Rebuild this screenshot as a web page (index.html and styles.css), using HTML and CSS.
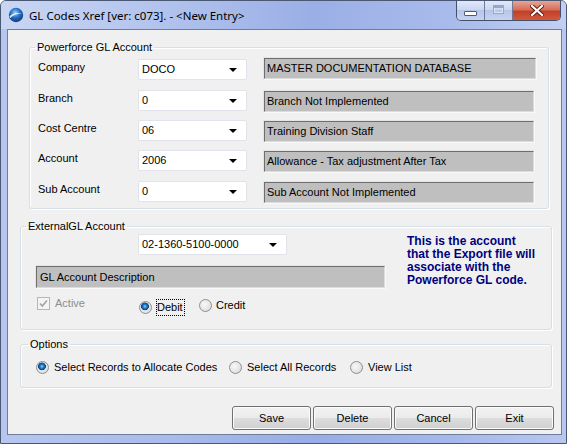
FILE: index.html
```html
<!DOCTYPE html>
<html lang="en">
<head>
<meta charset="utf-8">
<title>GL Codes Xref</title>
<link rel="stylesheet" href="styles.css">
</head>
<body>
<div class="window">
  <div class="titlebar">
    <svg class="app-icon" width="16" height="16" viewBox="0 0 16 16">
      <defs>
        <radialGradient id="orb" cx="0.45" cy="0.35" r="0.7">
          <stop offset="0" stop-color="#9fd0ff"/>
          <stop offset="0.45" stop-color="#2a72c8"/>
          <stop offset="1" stop-color="#0c2f6e"/>
        </radialGradient>
      </defs>
      <circle cx="8" cy="8" r="7.2" fill="url(#orb)"/>
      <path d="M1.5 9.5 C4 6.2 9 5 14.6 6.6 C10 6.4 5.5 7.6 2.2 11 Z" fill="#ffffff" opacity="0.85"/>
    </svg>
    <span class="title-text">GL Codes Xref [ver: c073]. - &lt;New Entry&gt;</span>
    <div class="caption-buttons">
      <div class="cap cap-min"><span class="min-bar"></span></div>
      <div class="cap cap-max"><span class="max-box"></span></div>
      <div class="cap cap-close">
        <svg width="14" height="11" viewBox="0 0 14 11">
          <path d="M2 1 L12 10 M12 1 L2 10" stroke="#5a1a10" stroke-width="4" stroke-linecap="square"/>
          <path d="M2 1 L12 10 M12 1 L2 10" stroke="#ffffff" stroke-width="2.2" stroke-linecap="square"/>
        </svg>
      </div>
    </div>
  </div>

  <div class="client">
    <fieldset class="group group-gl">
      <legend>Powerforce GL Account</legend>
      <div class="gl-grid">
        <div class="gl-row first">
          <span class="lbl">Company</span>
          <div class="combo"><span class="combo-text">DOCO</span><span class="arrow"></span></div>
          <div class="desc wide"><span class="desc-inner">MASTER DOCUMENTATION DATABASE</span></div>
        </div>
        <div class="gl-row">
          <span class="lbl">Branch</span>
          <div class="combo"><span class="combo-text">0</span><span class="arrow"></span></div>
          <div class="desc"><span class="desc-inner">Branch Not Implemented</span></div>
        </div>
        <div class="gl-row">
          <span class="lbl">Cost Centre</span>
          <div class="combo"><span class="combo-text">06</span><span class="arrow"></span></div>
          <div class="desc"><span class="desc-inner">Training Division Staff</span></div>
        </div>
        <div class="gl-row">
          <span class="lbl">Account</span>
          <div class="combo"><span class="combo-text">2006</span><span class="arrow"></span></div>
          <div class="desc"><span class="desc-inner">Allowance - Tax adjustment After Tax</span></div>
        </div>
        <div class="gl-row">
          <span class="lbl">Sub Account</span>
          <div class="combo"><span class="combo-text">0</span><span class="arrow"></span></div>
          <div class="desc"><span class="desc-inner">Sub Account Not Implemented</span></div>
        </div>
      </div>
    </fieldset>

    <fieldset class="group group-ext">
      <legend>ExternalGL Account</legend>
      <div class="ext-grid">
        <div class="ext-left">
          <div class="combo combo-ext"><span class="combo-text">02-1360-5100-0000</span><span class="arrow"></span></div>
          <div class="desc desc-ext"><span class="desc-inner">GL Account Description</span></div>
          <div class="ext-checks">
            <label class="check-item">
              <span class="checkbox">
                <svg width="11" height="11" viewBox="0 0 11 11"><path d="M2 5.5 L4.3 8 L9 2.5" fill="none" stroke="#a3a3a3" stroke-width="1.6"/></svg>
              </span>
              <span class="disabled-text">Active</span>
            </label>
            <label class="radio-item debit"><span class="radio on"></span><span class="focus">Debit</span></label>
            <label class="radio-item"><span class="radio"></span><span>Credit</span></label>
          </div>
        </div>
        <p class="note">This is the account<br>that the Export file will<br>associate with the<br>Powerforce GL code.</p>
      </div>
    </fieldset>

    <fieldset class="group group-opts">
      <legend>Options</legend>
      <div class="opts-row">
        <label class="radio-item opt-1"><span class="radio on"></span><span>Select Records to Allocate Codes</span></label>
        <label class="radio-item opt-2"><span class="radio"></span><span>Select All Records</span></label>
        <label class="radio-item"><span class="radio"></span><span>View List</span></label>
      </div>
    </fieldset>

    <div class="buttons">
      <button class="btn">Save</button>
      <button class="btn">Delete</button>
      <button class="btn">Cancel</button>
      <button class="btn">Exit</button>
    </div>
  </div>
</div>
</body>
</html>
```

FILE: styles.css
```css
html, body {
  margin: 0;
  padding: 0;
  background: #ffffff;
}

body {
  font-family: "Liberation Sans", Arial, sans-serif;
  font-size: 11px;
  line-height: 13px;
  color: #000000;
}

/* ---- window frame ---- */
.window {
  box-sizing: border-box;
  width: 567px;
  height: 444px;
  border: 1px solid #4b5873;
  border-radius: 6px 6px 0 0;
  background: linear-gradient(90deg, #b7c6ee 0%, #a9bbea 30%, #98ade5 55%, #a6b8ea 80%, #b9c7ef 100%);
  display: flex;
  flex-direction: column;
}

.titlebar {
  height: 28px;
  display: flex;
  align-items: flex-start;
  background: linear-gradient(90deg, #c9d6f3 0%, #b5c5ee 25%, #9aafe6 55%, #a9bbeb 80%, #c2cff2 100%);
  border-radius: 5px 5px 0 0;
}

.app-icon {
  margin: 6px 0 0 7px;
  flex: none;
}

.title-text {
  margin: 7px 0 0 5px;
  font-family: "Noto Sans", "Liberation Sans", sans-serif;
  font-size: 11.5px;
  line-height: 16px;
  color: #000000;
  white-space: nowrap;
}

.caption-buttons {
  margin-left: auto;
  margin-right: 5px;
  display: flex;
  height: 19px;
  border: 1px solid #44506b;
  border-top: none;
  border-radius: 0 0 5px 5px;
  overflow: hidden;
}

.cap {
  display: flex;
  align-items: center;
  justify-content: center;
  height: 100%;
}

.cap-min,
.cap-max {
  width: 27px;
  background: linear-gradient(#e1e8f8 0%, #cbd6f1 45%, #b6c5ea 50%, #c6d3f0 100%);
  border-right: 1px solid #6d7a98;
}

.min-bar {
  width: 11px;
  height: 3px;
  margin-top: 5px;
  background: #ffffff;
  border: 1px solid #515c74;
  border-radius: 1px;
}

.max-box {
  width: 9px;
  height: 7px;
  border: 1px solid #9aa7c4;
  box-shadow: inset 0 2px 0 #9aa7c4, inset 0 0 0 1px #dde5f6;
  margin-top: -2px;
}

.cap-close {
  width: 47px;
  background: linear-gradient(#e8a596 0%, #d7705a 45%, #c2412a 55%, #d2583d 100%);
}

/* ---- client area ---- */
.client {
  box-sizing: border-box;
  margin: 0 0 0 6px;
  width: 555px;
  height: 406px;
  border: 1px solid #6f7d99;
  background: #f0f0f0;
}

.group {
  box-sizing: border-box;
  margin: 0;
  padding: 0;
  border: 1px solid #d5dfe5;
  border-radius: 3px;
  box-shadow: inset 1px 1px 0 #ffffff, 1px 1px 0 #ffffff;
  min-width: 0;
}

.group legend {
  padding: 0 2px;
  line-height: 13px;
}

.group-gl {
  margin: 11px 0 0 21px;
  width: 520px;
  height: 168px;
}
.group-gl legend { margin-left: 5px; }

.gl-grid {
  margin-top: 5px;
  display: grid;
  grid-template-rows: 31px 30px 30px 31px 30px;
}

.gl-row {
  display: flex;
  align-items: flex-start;
}

.lbl {
  width: 100px;
  margin: 2px 0 0 8px;
  flex: none;
}

/* drop-down combo */
.combo {
  box-sizing: border-box;
  flex: none;
  width: 109px;
  height: 21px;
  background: #ffffff;
  border: 1px solid #e2e3ea;
  border-radius: 2px;
  display: flex;
  align-items: center;
  padding: 0 0 0 3px;
}

.combo-text {
  flex: 1;
  white-space: nowrap;
}

.arrow {
  width: 0;
  height: 0;
  border-left: 4px solid transparent;
  border-right: 4px solid transparent;
  border-top: 4px solid #000000;
  margin: 1px 9px 0 0;
}

/* read-only description box */
.desc {
  box-sizing: border-box;
  flex: none;
  margin-left: 16px;
  width: 272px;
  height: 23px;
  border: 1px solid #e4e4e4;
  border-right-color: #f8f8f8;
  border-bottom-color: #f8f8f8;
  display: flex;
}
.desc.wide { width: 274px; }
.gl-row.first .desc { margin-top: -2px; }

.desc-inner {
  flex: 1;
  background: #bfbfbf;
  border-top: 1px solid #6e6e6e;
  border-left: 1px solid #6e6e6e;
  border-right: 1px solid #dcdcdc;
  border-bottom: 1px solid #dcdcdc;
  padding: 3px 0 0 2px;
  white-space: nowrap;
}

/* ---- external account ---- */
.group-ext {
  margin: 11px 0 0 12px;
  width: 532px;
  height: 110px;
}
.group-ext legend { margin-left: 5px; }

.ext-grid {
  display: grid;
  grid-template-columns: 365px auto;
  column-gap: 21px;
}

.combo-ext {
  margin: 1px 0 0 117px;
  width: 149px;
}

.desc-ext {
  margin: 10px 0 0 14px;
  width: 351px;
  height: 24px;
}
.desc-ext .desc-inner { padding-top: 4px; padding-left: 3px; }

.ext-checks {
  display: flex;
  align-items: flex-start;
  margin: 8px 0 0 16px;
}

.check-item {
  display: flex;
  align-items: center;
  gap: 5px;
  width: 103px;
}

.checkbox {
  box-sizing: border-box;
  width: 13px;
  height: 13px;
  border: 1px solid #b6b6b6;
  background: #f4f4f4;
  display: flex;
  align-items: center;
  justify-content: center;
}

.disabled-text { color: #8d8d8d; }

.radio-item {
  display: flex;
  align-items: center;
  gap: 4px;
  white-space: nowrap;
}

.ext-checks .radio-item { margin-top: 2px; }
.debit { width: 60px; margin-left: -1px; }

.focus {
  border: 1px dotted #000000;
  padding: 1px 1px 1px 0;
}

.radio {
  box-sizing: border-box;
  flex: none;
  width: 13px;
  height: 13px;
  border-radius: 50%;
  border: 1px solid #8e8f8f;
  background: radial-gradient(circle at 40% 40%, #f8f8f8 0%, #e6e6e6 55%, #cfcfcf 100%);
}

.radio.on {
  background:
    radial-gradient(circle at 45% 40%, #9fd8ff 0, #2a8ad8 1.5px, #0d5aa6 3px, #0a3d78 3.6px, transparent 4.2px),
    radial-gradient(circle at 40% 40%, #f8f8f8 0%, #e6e6e6 55%, #cfcfcf 100%);
}

.note {
  margin: 2px 0 0 0;
  font-size: 12px;
  font-weight: bold;
  color: #00007f;
  line-height: 13px;
  white-space: nowrap;
}

/* ---- options ---- */
.group-opts {
  margin: 8px 0 0 12px;
  width: 532px;
  height: 50px;
}
.group-opts legend { margin-left: 7px; }

.opts-row {
  display: flex;
  margin: 10px 0 0 15px;
}
.opts-row .radio-item { gap: 5px; }
.opt-1 { width: 193px; }
.opt-2 { width: 121px; }

/* ---- command buttons ---- */
.buttons {
  display: flex;
  justify-content: flex-end;
  gap: 2px;
  margin-top: 18px;
  padding-right: 7px;
}

.btn {
  box-sizing: border-box;
  width: 79px;
  height: 24px;
  border: 1px solid #707070;
  border-radius: 3px;
  background: linear-gradient(#f2f2f2 0%, #ebebeb 48%, #dddddd 52%, #cfcfcf 100%);
  box-shadow: inset 0 0 0 1px #fbfbfb;
  font-family: "Liberation Sans", Arial, sans-serif;
  font-size: 11px;
  color: #000000;
  padding: 0;
}
```
